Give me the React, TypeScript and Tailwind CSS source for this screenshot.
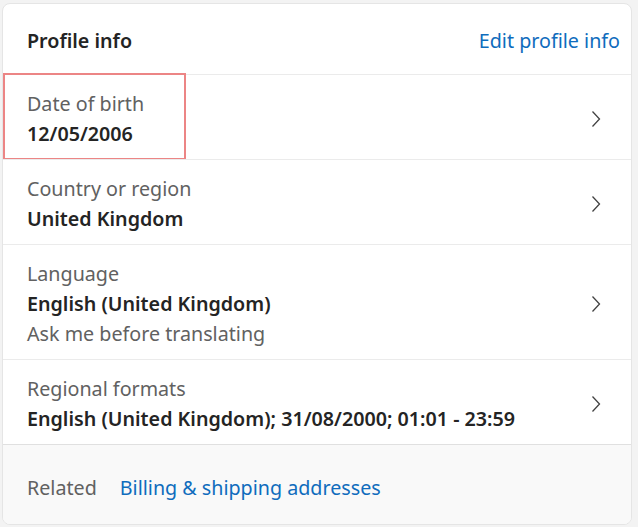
import { ReactNode } from "react";

type Row = {
  label: string;
  value: string;
  note?: string;
  highlight?: boolean;
};

const rows: Row[] = [
  { label: "Date of birth", value: "12/05/2006", highlight: true },
  { label: "Country or region", value: "United Kingdom" },
  {
    label: "Language",
    value: "English (United Kingdom)",
    note: "Ask me before translating",
  },
  {
    label: "Regional formats",
    value: "English (United Kingdom); 31/08/2000; 01:01 - 23:59",
  },
];

function Chevron() {
  return (
    <svg width="10" height="18" viewBox="0 0 10 18" fill="none" className="shrink-0">
      <path d="M1.5 1.5 L8.5 9 L1.5 16.5" stroke="#424242" strokeWidth="1.3" />
    </svg>
  );
}

function InfoRow({ row }: { row: Row }) {
  const body: ReactNode = (
    <div className="flex flex-col">
      <span className="text-[#616161]">{row.label}</span>
      <span className="font-semibold text-[#242424]">{row.value}</span>
      {row.note && <span className="text-[#616161]">{row.note}</span>}
    </div>
  );

  return (
    <div className="relative flex items-center justify-between border-t border-[#ebebeb] pl-[24px] pr-[30px] pt-[14px] pb-[10px]">
      {row.highlight && (
        <div className="pointer-events-none absolute left-0 top-[-2px] h-[87px] w-[183px] border-2 border-[#ec8585]" />
      )}
      {body}
      <Chevron />
    </div>
  );
}

export default function App() {
  return (
    <div
      className="h-[527px] w-[638px] bg-[#f3f3f3] pl-[2px] pt-[3px] text-[19.7px] leading-[30px]"
      style={{ fontFamily: '"Noto Sans", "Open Sans", sans-serif' }}
    >
      <div className="flex h-[522px] w-[630px] flex-col overflow-hidden rounded-lg border border-[#e5e5e5] bg-white">
        <div className="flex h-[70px] items-center justify-between pl-[24px] pr-[11px] pt-[3px]">
          <span className="font-semibold text-[#242424]">Profile info</span>
          <a className="text-[#0f6cbd]">Edit profile info</a>
        </div>

        {rows.map((r) => (
          <InfoRow key={r.label} row={r} />
        ))}

        <div className="flex flex-1 items-center gap-[23px] border-t border-[#e0e0e0] bg-[#f9f9f9] pl-[24px] pt-[6px]">
          <span className="text-[#616161]">Related</span>
          <a className="text-[#0f6cbd]">Billing &amp; shipping addresses</a>
        </div>
      </div>
    </div>
  );
}
